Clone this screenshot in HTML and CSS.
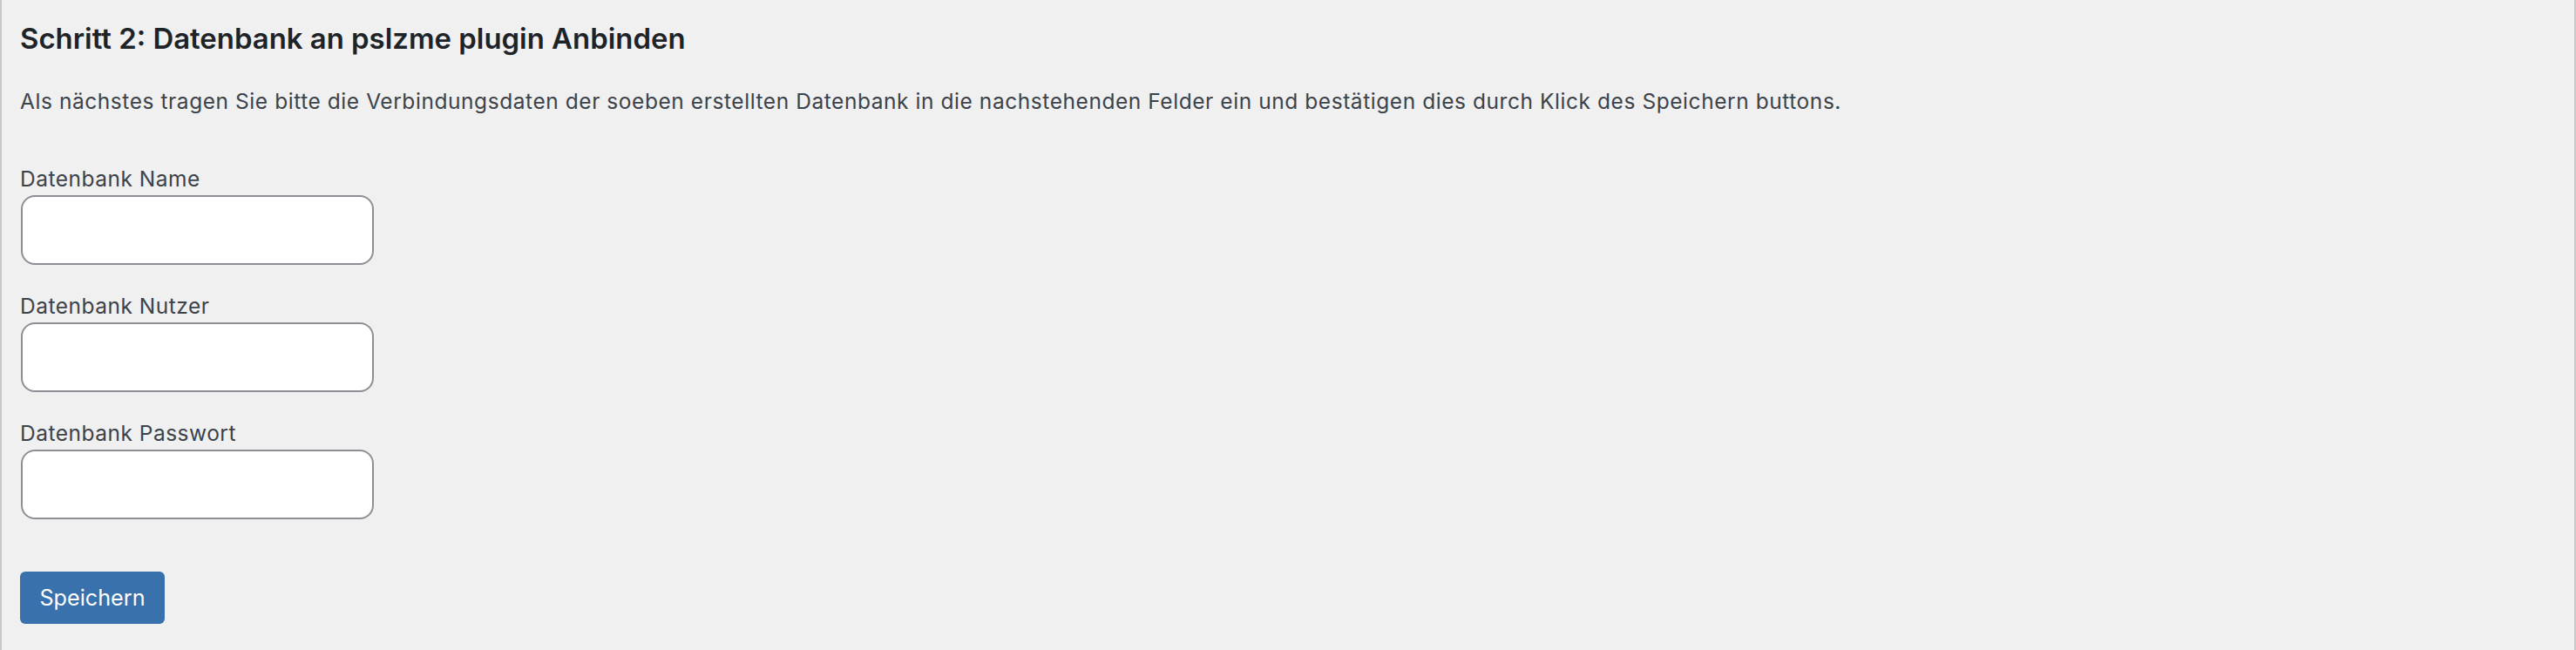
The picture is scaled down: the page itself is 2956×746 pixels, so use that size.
FILE: index.html
```html
<!DOCTYPE html>
<html lang="de">
<head>
<meta charset="utf-8">
<title>Schritt 2</title>
<link rel="stylesheet" href="styles.css">
</head>
<body>
<div class="page">
  <div class="content">
    <h2 class="title">Schritt 2: Datenbank an pslzme plugin Anbinden</h2>
    <p class="intro">Als nächstes tragen Sie bitte die Verbindungsdaten der soeben erstellten Datenbank in die nachstehenden Felder ein und bestätigen dies durch Klick des Speichern buttons.</p>
    <form class="form">
      <div class="field">
        <label class="label" for="dbname">Datenbank Name</label>
        <input class="input" id="dbname" type="text">
      </div>
      <div class="field">
        <label class="label" for="dbuser">Datenbank Nutzer</label>
        <input class="input" id="dbuser" type="text">
      </div>
      <div class="field">
        <label class="label" for="dbpass">Datenbank Passwort</label>
        <input class="input" id="dbpass" type="password">
      </div>
      <button class="button" type="button">Speichern</button>
    </form>
  </div>
</div>
</body>
</html>
```
FILE: styles.css
```css
html, body {
  margin: 0;
  padding: 0;
  background: #f0f0f1;
}
.page {
  box-sizing: border-box;
  height: 746px;
  border-left: 2px solid #c8c8c9;
  border-right: 2px solid #c8c8c9;
  background: #f0f0f1;
  font-family: Inter, "Noto Sans", sans-serif;
}
.content {
  padding: 24px 0 0 21px;
}
.title {
  margin: 0;
  font-size: 32.9px;
  line-height: 40px;
  font-weight: 600;
  color: #1d2327;
}
.intro {
  margin: 36px 0 0 0;
  font-size: 24.5px;
  line-height: 32px;
  letter-spacing: 0.56px;
  color: #3c434a;
}
.form {
  display: flex;
  flex-direction: column;
  align-items: flex-start;
  margin-top: 58px;
}
.field {
  display: flex;
  flex-direction: column;
  align-items: flex-start;
  gap: 4px;
  margin-bottom: 32px;
}
.label {
  font-size: 24.5px;
  line-height: 30px;
  letter-spacing: 0.5px;
  color: #3c434a;
}
.input {
  box-sizing: border-box;
  width: 405px;
  height: 80px;
  margin: 0 0 0 1px;
  border: 2px solid #8c8f94;
  border-radius: 16px;
  background: #fff;
}
.button {
  margin-top: 28px;
  box-sizing: border-box;
  width: 166px;
  height: 60px;
  border: 0;
  border-radius: 6px;
  background: #3871ac;
  color: #fff;
  font-family: Inter, "Noto Sans", sans-serif;
  font-size: 25.2px;
  padding: 0;
}
```
